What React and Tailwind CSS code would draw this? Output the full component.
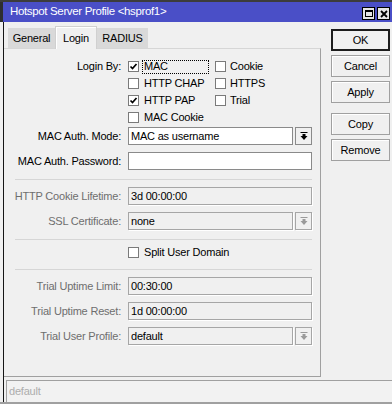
import React from "react";

const font = "font-['Liberation_Sans',Arial,sans-serif]";

function DropIcon({ color = "#000" }) {
  return (
    <svg width="8" height="9" viewBox="0 0 8 9">
      <rect x="0.5" y="0" width="7" height="1" fill={color} />
      <rect x="2.5" y="2" width="3" height="2" fill={color} />
      <path d="M0.5 4 H7.5 L4 8 Z" fill={color} />
    </svg>
  );
}

function Check({ checked }) {
  return (
    <span className="w-[11px] h-[11px] shrink-0 border border-[#7a7a7a] bg-white flex items-center justify-center">
      {checked && (
        <svg width="9" height="9" viewBox="0 0 9 9">
          <path d="M1.5 4.5 L3.5 6.5 L7.5 2" stroke="#000" strokeWidth="1.7" fill="none" />
        </svg>
      )}
    </span>
  );
}

function Field({ label, value, disabled, dropdown, className = "" }) {
  const box = disabled
    ? "border-[#a6a6a6] bg-[#f0f0f0] shadow-[1px_1px_0_#fff]"
    : "border-[#8a8a8a] bg-white";
  return (
    <div className={"flex items-center h-[18px] " + className}>
      <div className={"w-[117px] text-right " + (disabled ? "text-[#6e6e6e]" : "text-black")}>{label}</div>
      <div className="ml-[7px] flex h-full">
        <div className={"h-full border pl-[2px] flex items-center text-black " + box + (dropdown ? " w-[165px]" : " w-[184px]")}>
          {value}
        </div>
        {dropdown && (
          <div className={"ml-[2px] w-[17px] h-full border flex items-center justify-center " + (disabled ? "border-[#a6a6a6] bg-[#f0f0f0] shadow-[1px_1px_0_#fff]" : "border-[#8a8a8a] bg-[#f0f0f0]")}>
            <DropIcon color={disabled ? "#9a9a9a" : "#000"} />
          </div>
        )}
      </div>
    </div>
  );
}

function Sep({ className = "" }) {
  return <div className={"ml-[11px] w-[297px] h-px bg-[#d6d6d6] " + className} />;
}

function Btn({ children, primary, className = "" }) {
  return (
    <div
      className={
        "w-[59px] h-[22px] flex items-center justify-center bg-[#f0f0f0] text-black " +
        (primary ? "border-2 border-[#1c1c1c]" : "border border-[#a0a0a0] shadow-[inset_1px_1px_0_#fff]") +
        " " + className
      }
    >
      {children}
    </div>
  );
}

export default function App() {
  return (
    <div className={"w-[392px] h-[404px] bg-[#f0f0f0] flex flex-col overflow-hidden text-[11px] tracking-[-0.2px] " + font}>
      <div className="h-[2px] bg-[#3c3c3c]" />
      <div className="h-[20px] flex items-center bg-[#4a4fc7] border-l-[3px] border-[#2e2e2e]">
        <div className="pl-[7px] text-white text-[11.5px] tracking-[-0.35px] flex-1">Hotspot Server Profile &lt;hsprof1&gt;</div>
        <div className="flex gap-[2px] pr-[2px] self-start mt-[5px]">
          <div className="w-[13px] h-[13px] bg-[#e6e6e6] border border-black flex items-center justify-center">
            <div className="w-[8px] h-[7px] border border-t-2 border-black" />
          </div>
          <div className="w-[13px] h-[13px] bg-[#e6e6e6] border border-black flex items-center justify-center">
            <svg width="8" height="8" viewBox="0 0 8 8">
              <path d="M1 1 L7 7 M7 1 L1 7" stroke="#000" strokeWidth="1.8" />
            </svg>
          </div>
        </div>
      </div>

      <div className="ml-[3px] border-l border-[#151515] h-[380px] flex flex-col">
        <div className="h-[358px] flex">
          <div className="w-[317px] flex flex-col">
            <div className="h-[26px] flex items-end pl-[4px]">
              <div className="w-[47px] h-[20px] bg-[#d9d9d9] flex items-center justify-center">General</div>
              <div className="relative z-10 -mb-px w-[42px] h-[23px] bg-[#f0f0f0] border border-b-0 border-[#d0d0d0] shadow-[inset_1px_1px_0_#fff] flex items-center justify-center">Login</div>
              <div className="w-[51px] h-[20px] bg-[#d9d9d9] flex items-center justify-center">RADIUS</div>
            </div>
            <div className="h-[329px] border-t border-t-[#d6d6d6] border-r border-b border-[#a0a0a0] flex flex-col">
              <div className="mt-[9px] flex">
                <div className="w-[117px] h-[17px] flex items-center justify-end">Login By:</div>
                <div className="ml-[7px] flex flex-col">
                  {[
                    ["MAC", true, "Cookie", false],
                    ["HTTP CHAP", false, "HTTPS", false],
                    ["HTTP PAP", true, "Trial", false],
                    ["MAC Cookie", false, null, false],
                  ].map(([a, ac, b, bc], i) => (
                    <div key={a} className="h-[17px] flex items-center">
                      <div className="w-[87px] flex items-center">
                        <Check checked={ac} />
                        {i === 0 ? (
                          <span className="ml-[3px] w-[67px] h-[14px] border border-dotted border-black pl-[1px] flex items-center">{a}</span>
                        ) : (
                          <span className="ml-[5px]">{a}</span>
                        )}
                      </div>
                      {b && (
                        <div className="flex items-center">
                          <Check checked={bc} />
                          <span className="ml-[4px]">{b}</span>
                        </div>
                      )}
                    </div>
                  ))}
                </div>
              </div>
              <Field className="mt-[1px]" label="MAC Auth. Mode:" value="MAC as username" dropdown />
              <Field className="mt-[7px]" label="MAC Auth. Password:" value="" />
              <Sep className="mt-[9px]" />
              <Field className="mt-[7px]" label="HTTP Cookie Lifetime:" value="3d 00:00:00" disabled />
              <Field className="mt-[7px]" label="SSL Certificate:" value="none" disabled dropdown />
              <Sep className="mt-[9px]" />
              <div className="mt-[4px] h-[17px] flex items-center pl-[124px]">
                <Check />
                <span className="ml-[5px]">Split User Domain</span>
              </div>
              <Sep className="mt-[8px]" />
              <Field className="mt-[7px]" label="Trial Uptime Limit:" value="00:30:00" disabled />
              <Field className="mt-[7px]" label="Trial Uptime Reset:" value="1d 00:00:00" disabled />
              <Field className="mt-[7px]" label="Trial User Profile:" value="default" disabled dropdown />
            </div>
          </div>
          <div className="flex-1 pl-[10px] pt-[7px] flex flex-col">
            <Btn primary>OK</Btn>
            <Btn className="mt-[4px]">Cancel</Btn>
            <Btn className="mt-[4px]">Apply</Btn>
            <Btn className="mt-[10px]">Copy</Btn>
            <Btn className="mt-[4px]">Remove</Btn>
          </div>
        </div>
        <div className="ml-[2px] h-[22px] border-t border-l border-[#a0a0a0] bg-[#f2f2f2] pl-[2px] flex items-center text-[#adadad]">
          default
        </div>
      </div>
      <div className="h-[2px] bg-[#a0a0a0]" />
    </div>
  );
}
